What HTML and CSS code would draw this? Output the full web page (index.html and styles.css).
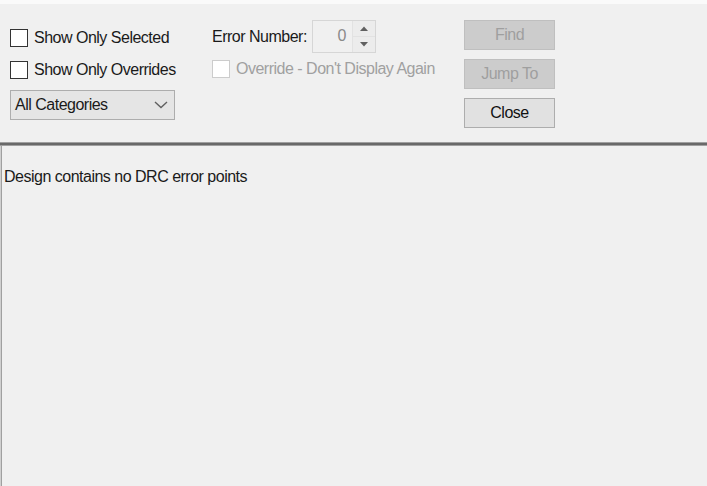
FILE: index.html
```html
<!DOCTYPE html>
<html>
<head>
<meta charset="utf-8">
<link rel="stylesheet" href="styles.css">
</head>
<body>
<div class="window">
  <div class="toolbar">
    <div class="col col-left">
      <label class="check-row"><span class="box"></span><span class="label">Show Only Selected</span></label>
      <label class="check-row"><span class="box"></span><span class="label">Show Only Overrides</span></label>
      <div class="combo">
        <span class="combo-text">All Categories</span>
        <svg class="chev" width="14" height="8" viewBox="0 0 14 8"><path d="M1 1 L7 6.5 L13 1" fill="none" stroke="#606060" stroke-width="1.4"/></svg>
      </div>
    </div>
    <div class="col col-mid">
      <div class="spin-row">
        <span class="label">Error Number:</span>
        <div class="spin">
          <span class="spin-val">0</span>
          <div class="spin-btns">
            <div class="spin-btn"><svg width="8" height="5" viewBox="0 0 8 5"><path d="M0 5 L4 0.5 L8 5 Z" fill="#606060"/></svg></div>
            <div class="spin-btn"><svg width="8" height="5" viewBox="0 0 8 5"><path d="M0 0 L4 4.5 L8 0 Z" fill="#606060"/></svg></div>
          </div>
        </div>
      </div>
      <label class="check-row disabled"><span class="box"></span><span class="label">Override - Don't Display Again</span></label>
    </div>
    <div class="col col-right">
      <div class="btn disabled">Find</div>
      <div class="btn disabled">Jump To</div>
      <div class="btn">Close</div>
    </div>
  </div>
  <div class="sep"></div>
  <div class="panel">
    <div class="message">Design contains no DRC error points</div>
  </div>
</div>
</body>
</html>
```

FILE: styles.css
```css
html, body {
  margin: 0;
  padding: 0;
  background: #f0f0f0;
}
.window {
  width: 707px;
  height: 486px;
  display: flex;
  flex-direction: column;
  font-family: "Liberation Sans", Arial, sans-serif;
  font-size: 16px;
  letter-spacing: -0.5px;
  color: #1a1a1a;
  background: #f0f0f0;
  border-top: 4px solid #fafafa;
  box-sizing: border-box;
  overflow: hidden;
}
.toolbar {
  height: 138px;
  display: flex;
  flex-shrink: 0;
}
.col {
  display: flex;
  flex-direction: column;
}
.col-left {
  margin-left: 10px;
  width: 202px;
  padding-top: 24px;
}
.col-mid {
  width: 252px;
  padding-top: 16px;
}
.col-right {
  padding-top: 16px;
  gap: 9px;
}
.check-row {
  display: flex;
  align-items: center;
  height: 19px;
  gap: 6px;
  white-space: nowrap;
}
.col-left .check-row + .check-row {
  margin-top: 13px;
}
.box {
  width: 16px;
  height: 16px;
  border: 1px solid #333;
  background: #fff;
  flex-shrink: 0;
}
.check-row.disabled {
  margin-top: 6px;
  color: #a0a0a0;
}
.check-row.disabled .box {
  border-color: #cccccc;
}
.combo {
  margin-top: 11px;
  border: 1px solid #adadad;
  background: #e5e5e5;
  display: flex;
  align-items: center;
  justify-content: space-between;
  padding: 0 6px 0 4px;
  box-sizing: border-box;
  width: 165px;
  height: 30px;
}
.chev {
  display: block;
}
.spin-row {
  display: flex;
  align-items: center;
  height: 33px;
  gap: 5px;
  white-space: nowrap;
}
.spin {
  width: 64px;
  height: 33px;
  box-sizing: border-box;
  border: 1px solid #d6d6d6;
  background: #f0f0f0;
  display: flex;
}
.spin-val {
  flex: 1;
  text-align: right;
  color: #8a8a8a;
  padding-right: 6px;
  line-height: 30px;
}
.spin-btns {
  width: 22px;
  display: flex;
  flex-direction: column;
  border-left: 1px solid #e2e2e2;
}
.spin-btn {
  flex: 1;
  display: flex;
  align-items: center;
  justify-content: center;
  background: #ececec;
}
.spin-btn + .spin-btn {
  border-top: 1px solid #e2e2e2;
}
.btn {
  width: 91px;
  height: 30px;
  box-sizing: border-box;
  border: 1px solid #adadad;
  background: #e1e1e1;
  display: flex;
  align-items: center;
  justify-content: center;
  color: #111;
}
.btn.disabled {
  background: #cccccc;
  border-color: #bfbfbf;
  color: #9f9f9f;
}
.sep {
  flex-shrink: 0;
  height: 2px;
  background: #696969;
  border-top: 1px solid #a0a0a0;
  border-bottom: 1px solid #a0a0a0;
}
.panel {
  flex: 1;
  border-left: 1px solid #d0d0d0;
  box-shadow: inset 1px 0 0 #a0a0a0;
  padding: 21px 0 0 3px;
}
.message {
  line-height: 20px;
  white-space: nowrap;
}
```
